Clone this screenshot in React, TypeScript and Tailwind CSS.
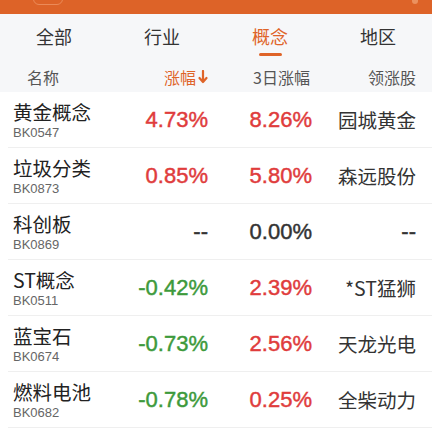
import React from 'react';

type Row = {
  name: string;
  code: string;
  change: string | null;
  change3d: string;
  leader: string | null;
};

const rows: Row[] = [
  { name: '黄金概念', code: 'BK0547', change: '4.73%', change3d: '8.26%', leader: '园城黄金' },
  { name: '垃圾分类', code: 'BK0873', change: '0.85%', change3d: '5.80%', leader: '森远股份' },
  { name: '科创板', code: 'BK0869', change: null, change3d: '0.00%', leader: null },
  { name: 'ST概念', code: 'BK0511', change: '-0.42%', change3d: '2.39%', leader: '*ST猛狮' },
  { name: '蓝宝石', code: 'BK0674', change: '-0.73%', change3d: '2.56%', leader: '天龙光电' },
  { name: '燃料电池', code: 'BK0682', change: '-0.78%', change3d: '0.25%', leader: '全柴动力' },
];

const tabs = ['全部', '行业', '概念', '地区'];

const cjk = { fontFamily: '"Noto Sans CJK SC", "Noto Sans", sans-serif' };
const num = { fontFamily: '"Liberation Sans", "Noto Sans CJK SC", sans-serif' };

function colorOf(v: string | null) {
  if (v === null) return 'text-[#333333]';
  if (v.startsWith('-')) return 'text-[#3d9a3b]';
  if (parseFloat(v) === 0) return 'text-[#333333]';
  return 'text-[#e03c3c]';
}

export default function App() {
  return (
    <div className="w-[432px] h-[432px] overflow-hidden bg-white" style={cjk}>
      {/* status strip */}
      <div className="h-[14px] bg-[#dd6328] overflow-hidden relative">
        <div className="absolute left-[33px] top-[-20px] w-[30px] h-[25px] rounded-[6px] border border-[#eb8a58]" />
        <div className="absolute right-[14px] top-[-6px] w-[6px] h-[10px] rounded-full bg-[#eb915f]" />
      </div>

      <div className="bg-[#f6f7f9]">
        <div className="grid grid-cols-4 h-[48px]">
          {tabs.map((t) => (
            <div key={t} className="flex flex-col items-center pt-[7px]">
              <span
                className={`text-[18px] leading-[30px] ${t === '概念' ? 'text-[#df6429]' : 'text-[#333333]'}`}
              >
                {t}
              </span>
              {t === '概念' && <span className="mt-[2px] w-[23px] h-[3px] rounded-full bg-[#df6429]" />}
            </div>
          ))}
        </div>
        <div className="grid grid-cols-[1fr_95px_104px_104px] pl-[13px] pr-[16px] h-[30px] items-center text-[16px]">
          <span className="pl-[14px] text-[#555555]">名称</span>
          <span className="text-right text-[#df6429] flex justify-end items-center">
            涨幅
            <svg width="10" height="14" viewBox="0 0 10 14" className="ml-[2px]">
              <path d="M5 1v10.5M1.5 8l3.5 4 3.5-4" stroke="#df6429" strokeWidth="2.2" fill="none" strokeLinecap="round" strokeLinejoin="round" />
            </svg>
          </span>
          <span className="text-right text-[#555555] pr-[2px]">3日涨幅</span>
          <span className="text-right text-[#555555]">领涨股</span>
        </div>
      </div>

      <div className="pl-[8px]">
        {rows.map((r) => (
          <div
            key={r.code}
            className="grid grid-cols-[1fr_95px_104px_104px] pl-[5px] pr-[16px] h-[56px] items-center border-b border-[#efefef]"
          >
            <div className="flex flex-col pt-[2px]">
              <span className="text-[19.5px] leading-[22px] text-[#222222]">{r.name}</span>
              <span className="text-[13px] leading-[15px] mt-[2px] text-[#666666]" style={num}>{r.code}</span>
            </div>
            <span className={`text-right text-[22px] [-webkit-text-stroke:0.45px_currentColor] ${colorOf(r.change)}`} style={num}>
              {r.change ?? '--'}
            </span>
            <span className={`text-right text-[22px] [-webkit-text-stroke:0.45px_currentColor] ${colorOf(r.change3d)}`} style={num}>
              {r.change3d}
            </span>
            <span className="text-right text-[19.5px] text-[#333333]">
              {r.leader ?? <span className="text-[22px] [-webkit-text-stroke:0.45px_currentColor]" style={num}>--</span>}
            </span>
          </div>
        ))}
      </div>
    </div>
  );
}
